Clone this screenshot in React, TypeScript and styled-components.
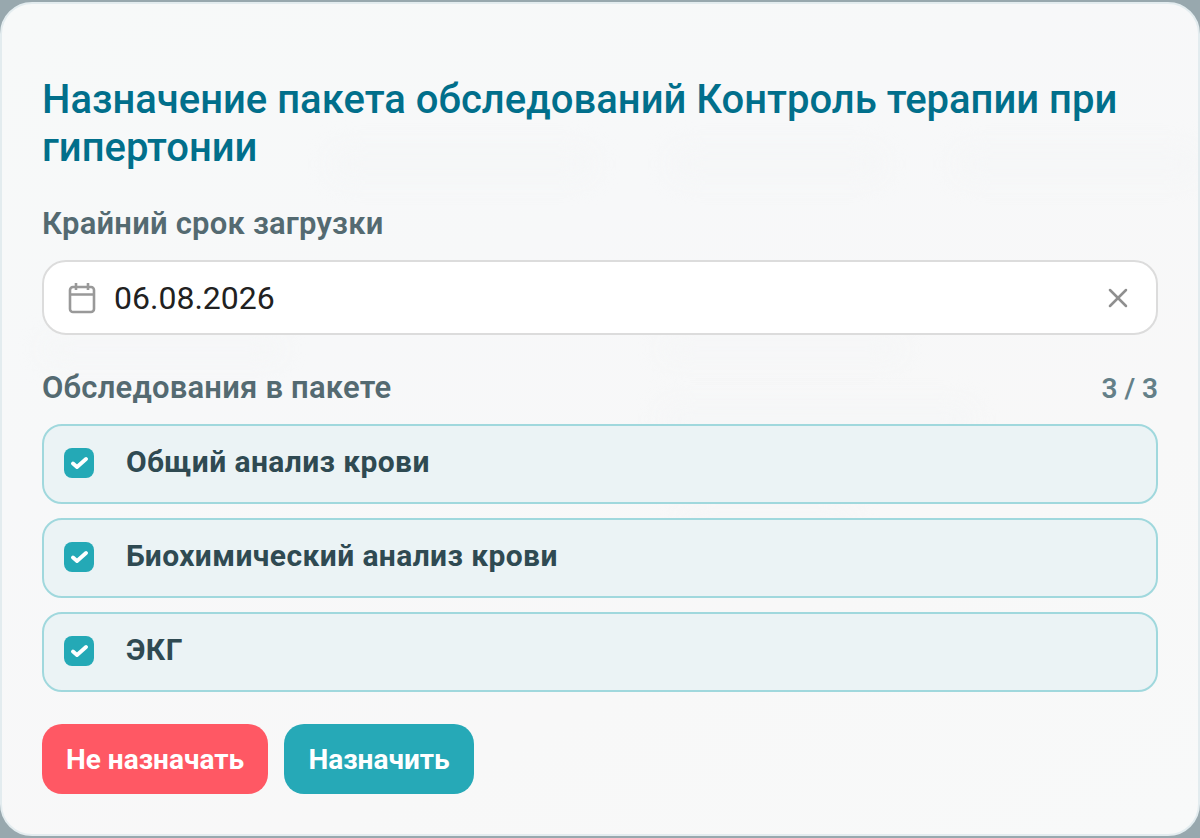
import React from 'react';
import styled, { createGlobalStyle } from 'styled-components';
import { X } from 'lucide-react';

const GlobalStyle = createGlobalStyle`
  html, body {
    margin: 0;
    padding: 0;
    height: 100%;
    background: #98a8ae;
    font-family: Roboto, "Noto Sans", sans-serif;
  }
`;

const Page = styled.div`
  width: 1200px;
  height: 838px;
  padding: 2px 0;
  box-sizing: border-box;
  overflow: hidden;
`;

const Card = styled.div`
  position: relative;
  overflow: hidden;
  height: 834px;
  box-sizing: border-box;
  padding: 72px 40px 0;
  border: 2px solid #e3ecef;
  border-radius: 32px;
  background: linear-gradient(155deg, #f7f9f9 0%, #f7f8f9 35%, #f8f8f8 70%, #f8f9f9 100%);
`;

// what shows through the frosted card from the page underneath
const Ghost = styled.div<{ $x: number; $y: number; $w: number; $h: number }>`
  position: absolute;
  left: ${props => props.$x}px;
  top: ${props => props.$y}px;
  width: ${props => props.$w}px;
  height: ${props => props.$h}px;
  border-radius: 12px;
  background: #f5f6f7;
  filter: blur(12px);
`;

const Content = styled.div`
  position: relative;
`;

const Title = styled.h2`
  margin: 0 0 35px;
  font-size: 40px;
  line-height: 48px;
  font-weight: 500;
  color: #016f8b;
`;

const FieldLabel = styled.div`
  font-size: 31px;
  line-height: 34px;
  font-weight: 600;
  letter-spacing: 0.2px;
  color: #546a71;
`;

const DateField = styled.div`
  display: flex;
  align-items: center;
  height: 75px;
  box-sizing: border-box;
  margin: 19px 0 36px;
  padding: 0 22px 0 24px;
  background: #fff;
  border: 2px solid #dcdcdc;
  border-radius: 24px;
`;

const DateValue = styled.span`
  flex: 1;
  margin-left: 18px;
  font-size: 32px;
  color: #212121;
`;

const SectionHead = styled.div`
  display: flex;
  justify-content: space-between;
  align-items: center;
  margin-bottom: 19px;
`;

const Counter = styled.span`
  font-size: 28px;
  font-weight: 600;
  color: #648088;
`;

const ExamList = styled.div`
  display: flex;
  flex-direction: column;
  gap: 14.5px;
`;

const ExamRow = styled.div`
  display: flex;
  align-items: flex-start;
  height: 79.5px;
  box-sizing: border-box;
  padding: 22px 20px 0;
  background: #ebf3f5;
  border: 2px solid #a0d8dd;
  border-radius: 20px;
`;

const CheckMark = styled.span`
  display: flex;
  align-items: center;
  justify-content: center;
  flex: none;
  width: 30px;
  height: 30px;
  border-radius: 8px;
  background: #24a9b6;
`;

const ExamName = styled.span`
  margin-left: 32px;
  font-size: 30px;
  line-height: 28px;
  font-weight: 700;
  letter-spacing: 0.4px;
  color: #2f4a52;
`;

const Actions = styled.div`
  display: flex;
  gap: 16px;
  margin-top: 32.5px;
`;

const ActionButton = styled.button<{ $danger?: boolean }>`
  height: 70px;
  min-width: ${props => (props.$danger ? '226px' : '190px')};
  padding: 0 24px;
  border: none;
  border-radius: 20px;
  font-family: inherit;
  font-size: 28px;
  font-weight: 700;
  color: #fff;
  background: ${props => (props.$danger ? '#ff5864' : '#26a9b7')};
`;

const exams = ['Общий анализ крови', 'Биохимический анализ крови', 'ЭКГ'];

const ghosts = [
  { x: 330, y: 145, w: 260, h: 30 },
  { x: 670, y: 145, w: 210, h: 30 },
  { x: 955, y: 145, w: 240, h: 30 },
  { x: 40, y: 335, w: 240, h: 20 },
  { x: 660, y: 335, w: 240, h: 20 },
  { x: 660, y: 400, w: 310, h: 30 },
  { x: 680, y: 505, w: 170, h: 30 },
];

const CalendarIcon = () => (
  <svg width="28" height="32" viewBox="0 0 28 32" fill="none" stroke="#999" strokeWidth="2.6">
    <rect x="2" y="5" width="24" height="25" rx="3" />
    <path d="M2 12.5h24M8 1v7M20 1v7" />
  </svg>
);

const CheckIcon = () => (
  <svg width="18" height="14" viewBox="0 0 18 14" fill="none" stroke="#fff" strokeWidth="3.8" strokeLinecap="round" strokeLinejoin="round">
    <path d="M3 7.5l4 3.5L16 3" />
  </svg>
);

const App = () => {
  return (
    <Page>
      <GlobalStyle />
      <Card>
        {ghosts.map(g => (
          <Ghost key={`${g.x}-${g.y}`} $x={g.x} $y={g.y} $w={g.w} $h={g.h} />
        ))}
        <Content>
          <Title>Назначение пакета обследований Контроль терапии при гипертонии</Title>
          <FieldLabel>Крайний срок загрузки</FieldLabel>
          <DateField>
            <CalendarIcon />
            <DateValue>06.08.2026</DateValue>
            <X size={32} color="#8f8f8f" strokeWidth={1.9} />
          </DateField>
          <SectionHead>
            <FieldLabel>Обследования в пакете</FieldLabel>
            <Counter>3 / 3</Counter>
          </SectionHead>
          <ExamList>
            {exams.map(name => (
              <ExamRow key={name}>
                <CheckMark>
                  <CheckIcon />
                </CheckMark>
                <ExamName>{name}</ExamName>
              </ExamRow>
            ))}
          </ExamList>
          <Actions>
            <ActionButton $danger>Не назначать</ActionButton>
            <ActionButton>Назначить</ActionButton>
          </Actions>
        </Content>
      </Card>
    </Page>
  );
};

export default App;
